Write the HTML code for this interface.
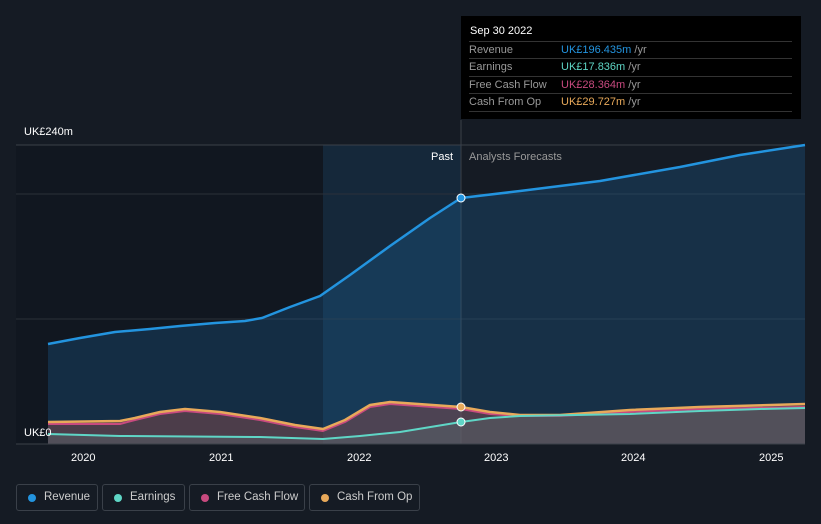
<!DOCTYPE html><html><head><style>
html,body{margin:0;width:821px;height:524px;overflow:hidden}
body{background:#151b24;font-family:"Liberation Sans",sans-serif;position:relative}
.tt{position:absolute;left:461px;top:16px;width:340px;height:103px;background:#000;color:#fff;font-size:11px}
.tt .h{position:absolute;left:9px;top:9px;font-size:11px}
.row{position:absolute;left:8px;width:323px;height:17px;border-top:1px solid #333;color:#999;line-height:17px}
.row span{position:absolute;left:92px}
.lg{position:absolute;top:484px;height:27px;border:1px solid #3a4049;border-radius:3px;color:#ccc;font-size:11.5px;line-height:25px;box-sizing:border-box;padding-left:27px;white-space:nowrap}
.lg i{position:absolute;left:11px;top:9px;width:8px;height:8px;border-radius:50%}
.ax{position:absolute;top:452px;color:#fff;font-size:11px}
</style></head><body>
<svg width="821" height="524" style="position:absolute;left:0;top:0">
<rect x="16" y="145" width="307" height="299" fill="#111720"/>
<rect x="323" y="145" width="138" height="299" fill="#15283a"/>
<line x1="16" y1="145" x2="805" y2="145" stroke="#3a4049"/>
<line x1="16" y1="194" x2="805" y2="194" stroke="#2a3039"/>
<line x1="16" y1="319" x2="805" y2="319" stroke="#2a3039"/>
<line x1="461" y1="120" x2="461" y2="444" stroke="#3a4049"/>
<path d="M48,344 L80,338 L115,332 L150,329 L180,326 L215,323 L245,321 L262,318 L290,307 L320,296 L350,275 L390,246 L430,218 L461,198 L520,191 L600,181 L680,167 L740,155 L805,145 L805,444 L48,444Z" fill="#1f6fb0" fill-opacity="0.25"/>
<path d="M48,344 L80,338 L115,332 L150,329 L180,326 L215,323 L245,321 L262,318 L290,307 L320,296 L350,275 L390,246 L430,218 L461,198 L520,191 L600,181 L680,167 L740,155 L805,145" fill="none" stroke="#2394df" stroke-width="2.5" stroke-linejoin="round"/>
<path d="M48,422 L120,421 L135,418 L160,412 L185,409 L220,412 L260,418 L295,425 L323,429 L345,420 L370,405 L390,402 L461,407 L490,412 L520,415 L560,415 L630,410 L700,407 L805,404 L805,444 L48,444Z" fill="#7a4a50" fill-opacity="0.55"/>
<path d="M48,424 L120,424 L135,420 L160,414 L185,411 L220,414 L260,420 L295,427 L323,431 L345,422 L370,407 L390,404 L461,409 L490,414 L520,416 L560,416 L630,412 L700,409 L805,407" fill="none" stroke="#c84a7f" stroke-width="2" stroke-linejoin="round"/>
<path d="M48,422 L120,421 L135,418 L160,412 L185,409 L220,412 L260,418 L295,425 L323,429 L345,420 L370,405 L390,402 L461,407 L490,412 L520,415 L560,415 L630,410 L700,407 L805,404" fill="none" stroke="#e8a95a" stroke-width="2.5" stroke-linejoin="round"/>
<path d="M48,434 L120,436 L260,437 L323,439 L360,436 L400,432 L461,422 L490,418 L520,416 L630,414 L700,411 L760,409 L805,408 L805,444 L48,444Z" fill="#5a6b70" fill-opacity="0.4"/>
<path d="M48,434 L120,436 L260,437 L323,439 L360,436 L400,432 L461,422 L490,418 L520,416 L630,414 L700,411 L760,409 L805,408" fill="none" stroke="#5fd6c6" stroke-width="2" stroke-linejoin="round"/>
<line x1="16" y1="444" x2="805" y2="444" stroke="#3a4049"/>
<circle cx="461" cy="198" r="4" fill="#2394df" stroke="#fff" stroke-width="1"/>
<circle cx="461" cy="407" r="4" fill="#e8a95a" stroke="#fff" stroke-width="1"/>
<circle cx="461" cy="422" r="4" fill="#5fd6c6" stroke="#fff" stroke-width="1"/>
<text x="24" y="135" fill="#fff" font-size="11" font-family="Liberation Sans">UK£240m</text>
<text x="24" y="436" fill="#fff" font-size="11" font-family="Liberation Sans">UK£0</text>
<text x="453" y="160" fill="#fff" font-size="11" text-anchor="end" font-family="Liberation Sans">Past</text>
<text x="469" y="160" fill="#999" font-size="11" font-family="Liberation Sans">Analysts Forecasts</text>
</svg>
<div class="ax" style="left:71px">2020</div><div class="ax" style="left:209px">2021</div><div class="ax" style="left:347px">2022</div><div class="ax" style="left:484px">2023</div><div class="ax" style="left:621px">2024</div><div class="ax" style="left:759px">2025</div>
<div class="tt"><div class="h">Sep 30 2022</div>
<div class="row" style="top:25px">Revenue<span style="color:#2394df">UK£196.435m <b style="font-weight:normal;color:#999">/yr</b></span></div>
<div class="row" style="top:42px">Earnings<span style="color:#5fd6c6">UK£17.836m <b style="font-weight:normal;color:#999">/yr</b></span></div>
<div class="row" style="top:60px">Free Cash Flow<span style="color:#c84a7f">UK£28.364m <b style="font-weight:normal;color:#999">/yr</b></span></div>
<div class="row" style="top:77px;border-bottom:1px solid #333">Cash From Op<span style="color:#e8a95a">UK£29.727m <b style="font-weight:normal;color:#999">/yr</b></span></div>
</div>
<div class="lg" style="left:16px;width:82px"><i style="background:#2394df"></i>Revenue</div>
<div class="lg" style="left:102px;width:83px"><i style="background:#5fd6c6"></i>Earnings</div>
<div class="lg" style="left:189px;width:116px"><i style="background:#c84a7f"></i>Free Cash Flow</div>
<div class="lg" style="left:309px;width:111px"><i style="background:#e8a95a"></i>Cash From Op</div>
</body></html>
